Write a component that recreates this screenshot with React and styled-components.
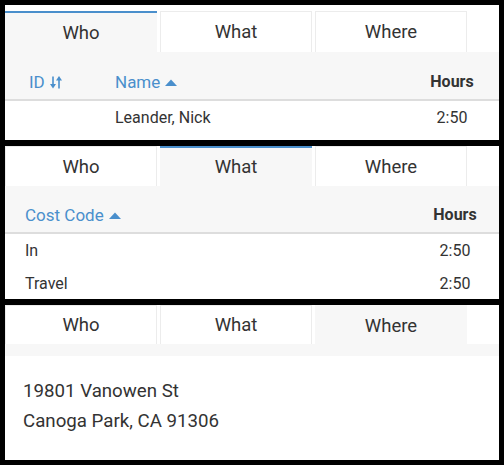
import React from "react";
import styled, { createGlobalStyle } from "styled-components";

const Global = createGlobalStyle`
  html, body { margin: 0; padding: 0; background: #000; }
  body { font-family: Roboto, "Noto Sans", Arial, sans-serif; }
  * { box-sizing: border-box; }
`;

const BLUE = "#4a8fcc";

const Page = styled.div`
  width: 504px;
  height: 465px;
  background: #000;
  padding: 5px;
  display: flex;
  flex-direction: column;
  gap: 6px;
`;

const Panel = styled.section`
  background: #fff;
  height: ${(p) => p.$h}px;
  padding-top: ${(p) => p.$pt || 0}px;
  overflow: hidden;
  display: flex;
  flex-direction: column;
  flex: 0 0 auto;
`;

const TabBar = styled.div`
  display: flex;
  gap: 3px;
  height: ${(p) => p.$h}px;
  flex: 0 0 auto;
`;

const Tab = styled.div`
  width: 152px;
  display: flex;
  align-items: center;
  justify-content: center;
  font-size: 18.5px;
  color: #333;
  background: ${(p) => (p.$active ? "#f7f7f7" : "#fff")};
  border: ${(p) => (p.$active ? "none" : "1px solid #ececec")};
  border-bottom: none;
  border-top: ${(p) =>
    p.$active
      ? `2px solid ${p.$bar ? BLUE : "#f7f7f7"}`
      : "1px solid #ececec"};
`;

const HeadRow = styled.div`
  display: grid;
  grid-template-columns: ${(p) => p.$cols};
  padding: 0 ${(p) => p.$pr}px 7px ${(p) => p.$pl}px;
  height: ${(p) => p.$h}px;
  background: #f7f7f7;
  border-bottom: 2px solid #ddd;
  align-items: end;
  flex: 0 0 auto;
`;

const HeadCell = styled.div`
  display: flex;
  align-items: center;
  gap: 5px;
  font-size: 17px;
  line-height: 20px;
  color: ${BLUE};
`;

const HoursHead = styled.div`
  font-size: 16px;
  line-height: 20px;
  font-weight: 700;
  color: #333;
  text-align: center;
`;

const Row = styled.div`
  display: grid;
  grid-template-columns: ${(p) => p.$cols};
  padding: 0 ${(p) => p.$pr}px 0 ${(p) => p.$pl}px;
  height: 33px;
  align-items: center;
  font-size: 16px;
  color: #333;
  flex: 0 0 auto;
`;

const Cell = styled.div`
  text-align: ${(p) => (p.$center ? "center" : "left")};
`;

const Strip = styled.div`
  height: 12px;
  background: #f7f7f7;
  flex: 0 0 auto;
`;

const Address = styled.div`
  padding: 20px 18px 0 18px;
  font-size: 18.7px;
  line-height: 30px;
  color: #333;
`;

const SortIcon = () => (
  <svg width="12" height="13" viewBox="0 0 12 13" fill={BLUE}>
    <rect x="2.2" y="0.5" width="1.6" height="9" />
    <polygon points="0,8 6,8 3,12.5" />
    <rect x="8.2" y="3.5" width="1.6" height="9" />
    <polygon points="6,4.5 12,4.5 9,0" />
  </svg>
);

const CaretUp = () => (
  <svg width="12" height="7" viewBox="0 0 12 7" fill={BLUE}>
    <polygon points="0,7 12,7 6,0.5" />
  </svg>
);

const Tabs = ({ active, h, bar = true }) => (
  <TabBar $h={h}>
    {["Who", "What", "Where"].map((t) => (
      <Tab key={t} $active={t === active} $bar={bar}>
        {t}
      </Tab>
    ))}
  </TabBar>
);

export default function App() {
  const c1 = "86px 1fr 80px";
  const c2 = "1fr 80px";
  return (
    <>
      <Global />
      <Page>
        <Panel $h={135} $pt={6}>
          <Tabs active="Who" h={41} />
          <HeadRow $cols={c1} $pl={24} $pr={7} $h={49}>
            <HeadCell>
              ID <SortIcon />
            </HeadCell>
            <HeadCell>
              Name <CaretUp />
            </HeadCell>
            <HoursHead>Hours</HoursHead>
          </HeadRow>
          <Row $cols={c1} $pl={24} $pr={7}>
            <Cell />
            <Cell>Leander, Nick</Cell>
            <Cell $center>2:50</Cell>
          </Row>
        </Panel>

        <Panel $h={153}>
          <Tabs active="What" h={40} />
          <HeadRow $cols={c2} $pl={20} $pr={4} $h={48}>
            <HeadCell>
              Cost Code <CaretUp />
            </HeadCell>
            <HoursHead>Hours</HoursHead>
          </HeadRow>
          <Row $cols={c2} $pl={20} $pr={4}>
            <Cell>In</Cell>
            <Cell $center>2:50</Cell>
          </Row>
          <Row $cols={c2} $pl={20} $pr={4}>
            <Cell>Travel</Cell>
            <Cell $center>2:50</Cell>
          </Row>
        </Panel>

        <Panel $h={155}>
          <Tabs active="Where" h={39} bar={false} />
          <Strip />
          <Address>
            <div>19801 Vanowen St</div>
            <div>Canoga Park, CA 91306</div>
          </Address>
        </Panel>
      </Page>
    </>
  );
}
